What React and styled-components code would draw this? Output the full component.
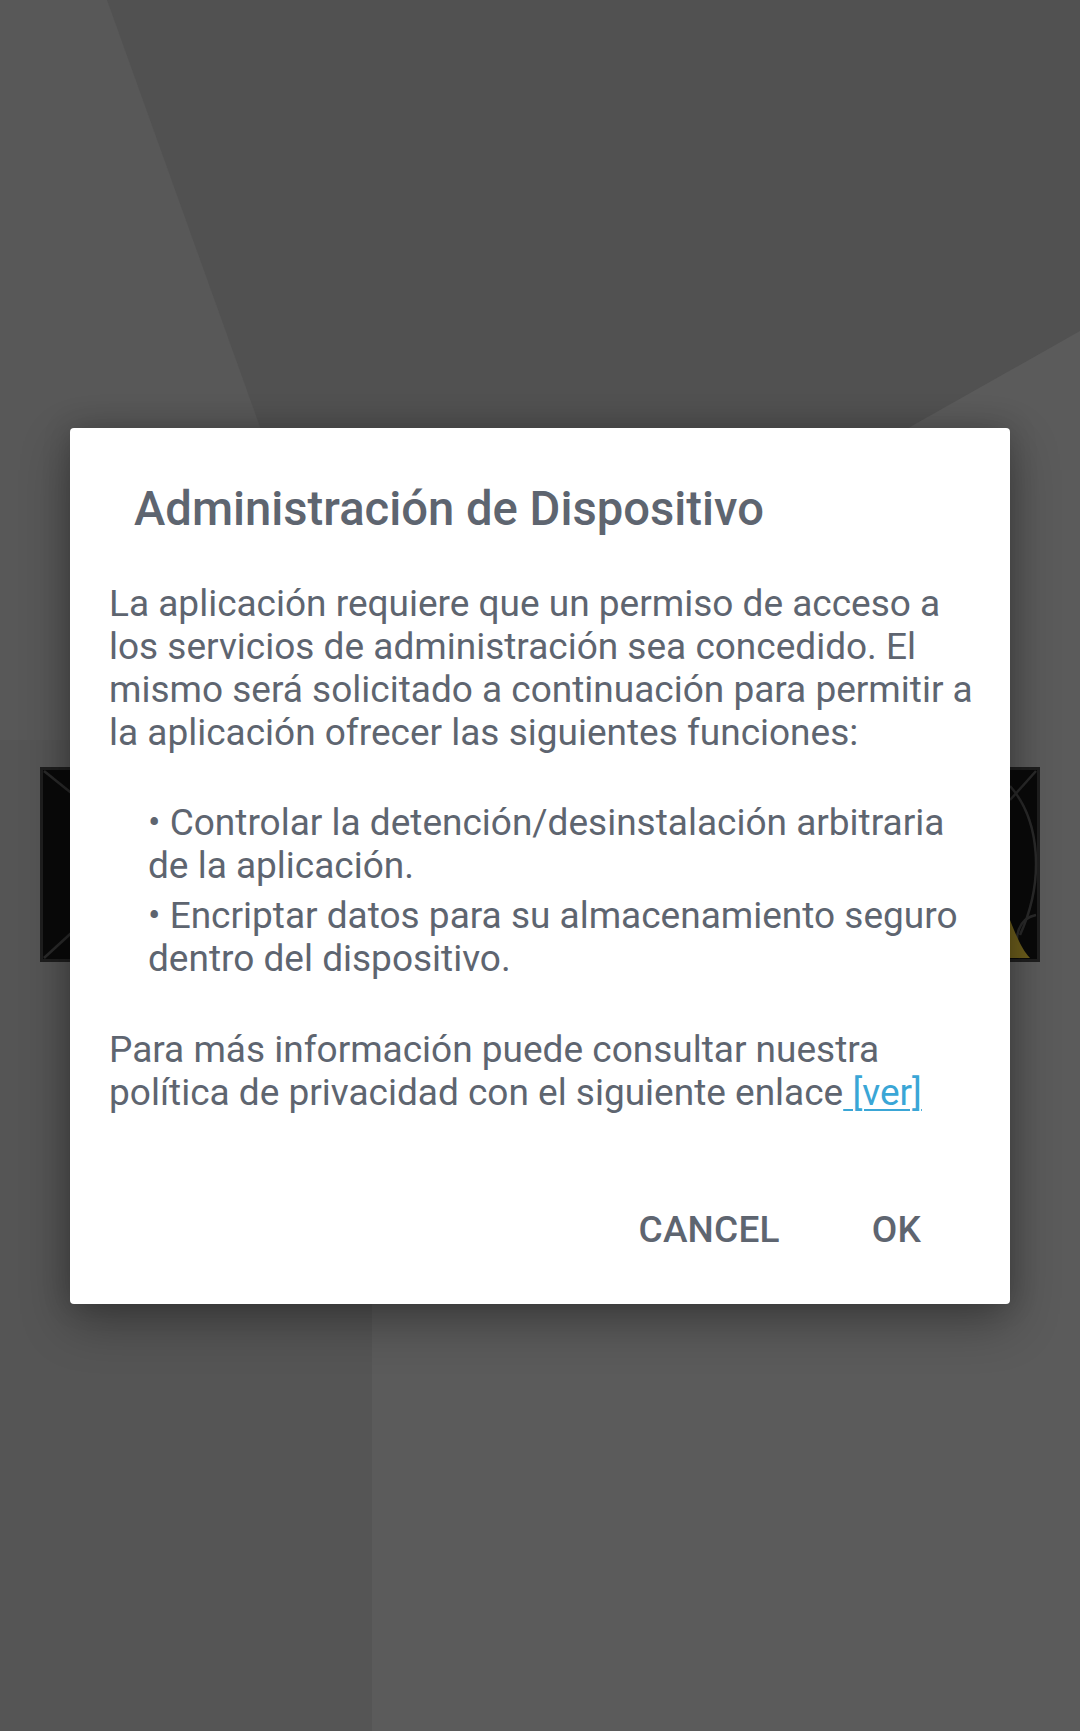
import React from "react";
import styled, { createGlobalStyle } from "styled-components";

const GlobalStyle = createGlobalStyle`
  html, body {
    margin: 0;
    padding: 0;
    background: #555555;
  }
  * { box-sizing: border-box; }
`;

const Screen = styled.div`
  width: 1080px;
  height: 1731px;
  display: grid;
  grid-template: 1fr / 1fr;
  overflow: hidden;
  font-family: Roboto, "Noto Sans", "Liberation Sans", sans-serif;
`;

const Layer = styled.div`
  grid-area: 1 / 1;
  width: 100%;
  height: 100%;
`;

const DialogLayer = styled(Layer)`
  display: flex;
  align-items: center;
  justify-content: center;
`;

const Dialog = styled.div`
  width: 940px;
  height: 876px;
  background: #ffffff;
  border-radius: 4px;
  box-shadow: 0 18px 50px rgba(0, 0, 0, 0.32), 0 0 28px rgba(0, 0, 0, 0.18);
  display: flex;
  flex-direction: column;
  padding: 51px 0 34px;
  color: #5e6570;
`;

const Title = styled.h2`
  margin: 0;
  padding: 0 39px 0 64px;
  font-size: 47.2px;
  font-weight: 500;
  line-height: 60px;
`;

const Body = styled.div`
  padding: 0 33px 0 39px;
  margin-top: 43px;
  flex: 1;
  font-size: 37px;
  line-height: 43px;
  font-weight: 400;
`;

const Paragraph = styled.p`
  margin: ${(p) => p.$top || 0}px 0 0;
`;

const BulletList = styled.div`
  margin-top: 47px;
  padding-left: 39px;
  display: flex;
  flex-direction: column;
  gap: 7px;
`;

const Bullet = styled.p`
  margin: 0;
`;

const Link = styled.a`
  color: #3aa6d6;
  text-decoration: underline;
  text-decoration-thickness: 2px;
  text-underline-offset: 4px;
`;

const ButtonRow = styled.div`
  display: flex;
  justify-content: flex-end;
  padding-right: 43px;
`;

const Button = styled.button`
  height: 80px;
  padding: 0 46px;
  border: none;
  background: transparent;
  font-family: inherit;
  font-size: 37px;
  font-weight: 500;
  color: #5e6570;
  text-transform: uppercase;
  letter-spacing: 0.2px;
`;

function Wallpaper() {
  return (
    <svg width="1080" height="1731" viewBox="0 0 1080 1731" style={{ display: "block" }}>
      <rect x="0" y="0" width="1080" height="1731" fill="#5b5b5b" />
      <polygon points="0,0 107,0 372,1160 372,1731 0,1731" fill="#555555" />
      <polygon points="0,0 107,0 260,427 330,740 0,740" fill="#585858" />
      <polygon points="107,0 1080,0 1080,331 910,427 640,740 372,1160 330,740 260,427" fill="#515151" />
      <rect x="41.5" y="768.5" width="997" height="192" fill="#0a0a0a" stroke="#1f1f1f" strokeWidth="3" />
      <g stroke="#2a2a2a" strokeWidth="2.5" fill="none">
        <line x1="44" y1="771" x2="80" y2="800" />
        <line x1="44" y1="958" x2="80" y2="925" />
        <line x1="1036" y1="771" x2="1010" y2="800" />
        <path d="M1010 786 C 1040 820, 1045 880, 1020 935" />
        <path d="M1036 915 C 1020 918, 1012 935, 1020 958" />
      </g>
      <path d="M1010 920 C 1016 935, 1022 950, 1030 958 L 1010 958 Z" fill="#6e5f1c" />
    </svg>
  );
}

export default function App() {
  return (
    <>
      <GlobalStyle />
      <Screen>
        <Layer>
          <Wallpaper />
        </Layer>
        <DialogLayer>
          <Dialog role="dialog">
            <Title>Administración de Dispositivo</Title>
            <Body>
              <Paragraph>
                La aplicación requiere que un permiso de acceso a los servicios de administración sea concedido. El mismo será solicitado a continuación para permitir a la aplicación ofrecer las siguientes funciones:
              </Paragraph>
              <BulletList>
                <Bullet>• Controlar la detención/desinstalación arbitraria de la aplicación.</Bullet>
                <Bullet>• Encriptar datos para su almacenamiento seguro dentro del dispositivo.</Bullet>
              </BulletList>
              <Paragraph $top={48}>
                Para más información puede consultar nuestra política de privacidad con el siguiente enlace<Link href="#"> [ver]</Link>
              </Paragraph>
            </Body>
            <ButtonRow>
              <Button>Cancel</Button>
              <Button>OK</Button>
            </ButtonRow>
          </Dialog>
        </DialogLayer>
      </Screen>
    </>
  );
}
